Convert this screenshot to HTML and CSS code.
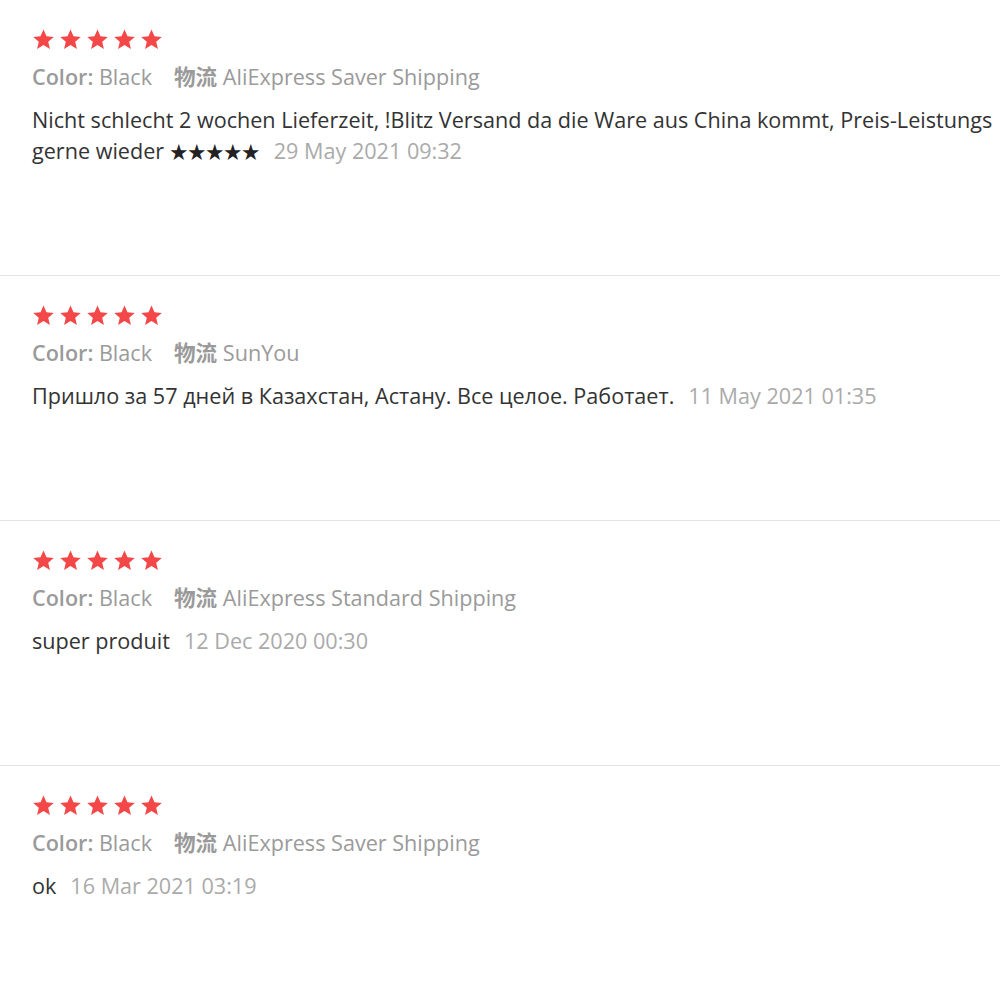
FILE: index.html
```html
<!DOCTYPE html>
<html lang="en">
<head>
  <meta charset="UTF-8" />
  <meta name="viewport" content="width=device-width, initial-scale=1.0"/>
  <title>Feedback</title>
  <link rel="stylesheet" href="styles.css">
</head>
<body>

  <div class="feedback-list" id="feedbackList"></div>

  <script>
    const feedback = [
      {
        color: "Black",
        shipping: "AliExpress Saver Shipping",
        text: "Nicht schlecht 2 wochen Lieferzeit, !Blitz Versand da die Ware aus China kommt, Preis-Leistungs gerne wieder ★★★★★",
        date: "29 May 2021 09:32"
      },
      {
        color: "Black",
        shipping: "SunYou",
        text: "Пришло за 57 дней в Казахстан, Астану. Все целое. Работает.",
        date: "11 May 2021 01:35"
      },
      {
        color: "Black",
        shipping: "AliExpress Standard Shipping",
        text: "super produit",
        date: "12 Dec 2020 00:30"
      },
      {
        color: "Black",
        shipping: "AliExpress Saver Shipping",
        text: "ok",
        date: "16 Mar 2021 03:19"
      }
    ];

    const star = `<svg viewBox="0 0 24 24" width="23" height="23"><path d="M12 1.6l3.1 7.1 7.6.6-5.8 5 1.8 7.5L12 17.8l-6.7 4 1.8-7.5-5.8-5 7.6-.6z" fill="#f44747"/></svg>`;

    const list = document.getElementById("feedbackList");

    feedback.forEach(item => {
      const row = document.createElement("div");
      row.className = "feedback-item";
      // kleine Sterne im Text etwas kleiner darstellen
      const text = item.text.replace(/(★+)/g, '<span class="txt-stars">$1</span>');
      row.innerHTML = `
        <div class="stars">${star.repeat(5)}</div>
        <div class="sku">
          <span><b>Color:</b> ${item.color}</span>
          <span><b>物流</b> ${item.shipping}</span>
        </div>
        <p class="content">${text}<span class="date">${item.date}</span></p>
      `;
      list.appendChild(row);
    });
  </script>

</body>
</html>
```

FILE: styles.css
```css
body {
  background: #fff;
  color: #333;
  font-family: "Open Sans", "Noto Sans CJK SC", sans-serif;
  margin: 0;
}

.feedback-list {
  width: 1000px;
  overflow: hidden;
}

.feedback-item {
  padding: 28px 0 109px 32px;
  border-bottom: 1px solid #e4e4e4;
}

.stars {
  display: flex;
  gap: 4px;
  height: 23px;
}

.stars svg {
  display: block;
}

.sku {
  display: flex;
  gap: 22px;
  margin-top: 12px;
  font-size: 21.6px;
  line-height: 28px;
  color: #9a9a9a;
}

.sku b {
  font-weight: 600;
}

.content {
  margin: 13px 0 0;
  font-size: 21.6px;
  line-height: 31px;
  color: #333;
}

.txt-stars {
  font-size: 18px;
  line-height: 1;
  color: #222;
}

.content .date {
  margin-left: 14px;
  color: #aaa;
}
```
